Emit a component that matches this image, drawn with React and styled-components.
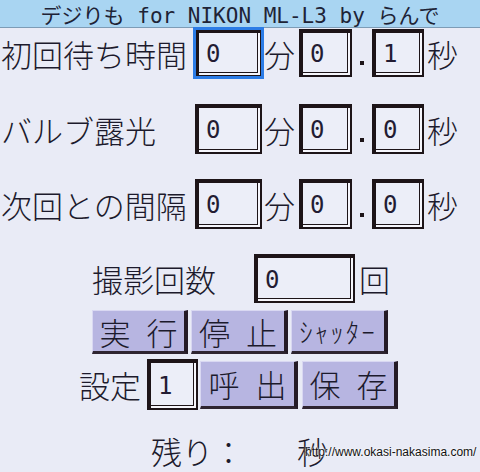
import React from 'react';
import styled, { createGlobalStyle } from 'styled-components';

const GlobalStyle = createGlobalStyle`
    html, body {
        margin: 0;
        padding: 0;
        background: #e9ebf6;
    }
    body {
        font-family: "Noto Sans CJK JP", sans-serif;
        font-weight: 300;
        color: #1c1a2c;
    }
`;

const Screen = styled.div`
    position: relative;
    width: 480px;
    height: 472px;
    overflow: hidden;
    display: flex;
    flex-direction: column;
    background: #e9ebf6;
`;

const TitleBar = styled.div`
    flex: none;
    height: 27px;
    border-bottom: 1px solid #7d9cb6;
    background: #a9d5f2;
    display: flex;
    align-items: center;
    justify-content: center;
    font-family: "DejaVu Sans Mono", "Noto Sans CJK JP", monospace;
    font-size: 21px;
    font-weight: 400;
    color: #1e2336;
    white-space: pre;
`;

const Row = styled.div`
    flex: none;
    display: flex;
    align-items: center;
    height: ${p => p.$h || 50}px;
    margin-top: ${p => p.$top || 0}px;
    padding-left: ${p => p.$left || 0}px;
    gap: ${p => p.$gap || 0}px;
`;

const Label = styled.span`
    flex: none;
    width: ${p => (p.$w ? `${p.$w}px` : 'auto')};
    margin-left: ${p => p.$ml || 0}px;
    margin-right: ${p => p.$mr || 0}px;
    font-size: 31px;
    line-height: 1;
    white-space: nowrap;
`;

const Field = styled.div`
    box-sizing: border-box;
    flex: none;
    width: ${p => p.$w}px;
    height: ${p => p.$h || 50}px;
    margin-left: ${p => p.$ml || 0}px;
    border-style: solid;
    border-color: #1d1418;
    border-width: 4px 2px 2px 4px;
    box-shadow: inset -2px -2px 0 #f6f6fc, inset -3px -3px 0 #1d1418;
    outline: ${p => (p.$focus ? '3px solid #2c7ce6' : 'none')};
    outline-offset: -1px;
    background: #eceef8;
    display: flex;
    align-items: center;
    padding-left: 7px;
    font-family: "DejaVu Sans Mono", monospace;
    font-size: 24px;
    font-weight: 400;
    color: #231c33;
`;

const Dot = styled.span`
    flex: none;
    width: 20px;
    align-self: stretch;
    display: flex;
    align-items: flex-end;
    justify-content: center;
    padding-bottom: 12px;
    box-sizing: border-box;
    &::before {
        content: '';
        width: 4px;
        height: 4px;
        background: #1d1418;
    }
`;

const Button = styled.div`
    box-sizing: border-box;
    flex: none;
    width: ${p => p.$w}px;
    height: ${p => p.$h || 44}px;
    background: #b7b5e1;
    border-style: solid;
    border-width: 1px 4px 3px 1px;
    border-color: #d9d8f2 #241a26 #2e2430 #d9d8f2;
    display: flex;
    align-items: center;
    justify-content: center;
    gap: 16px;
    font-size: ${p => p.$size || 31}px;
    letter-spacing: ${p => p.$spacing || 0}px;
    line-height: 1;
    white-space: nowrap;
`;

const Watermark = styled.span`
    position: absolute;
    left: 305px;
    top: 445px;
    font-family: "Liberation Sans", Arial, sans-serif;
    font-size: 12px;
    font-weight: 400;
    color: #111;
    text-shadow: 0 0 2px #fff, 0 0 2px #fff;
`;

const Chars = ({ text }) => text.split('').map((c, i) => <span key={i}>{c}</span>);

const TimeRow = ({ label, top, h, min, sec, tenth, focus }) => (
    <Row $top={top} $h={h}>
        <Label $w={194} style={{ paddingLeft: 1 }}>{label}</Label>
        <Field $w={67} $h={h} $focus={focus}>{min}</Field>
        <Label $ml={2} $mr={4}>分</Label>
        <Field $w={53} $h={h}>{sec}</Field>
        <Dot />
        <Field $w={52} $h={h}>{tenth}</Field>
        <Label $ml={3}>秒</Label>
    </Row>
);

const App = () => {
    return (
        <>
            <GlobalStyle />
            <Screen>
                <TitleBar>デジりも for NIKON ML-L3 by らんで</TitleBar>

                <TimeRow label="初回待ち時間" top={1} h={48} min="0" sec="0" tenth="1" focus />
                <TimeRow label="バルブ露光" top={27} h={50} min="0" sec="0" tenth="0" />
                <TimeRow label="次回との間隔" top={25} h={50} min="0" sec="0" tenth="0" />

                <Row $top={25} $h={49} $left={92}>
                    <Label>撮影回数</Label>
                    <Field $w={101} $h={49} $ml={38}>0</Field>
                    <Label $ml={4}>回</Label>
                </Row>

                <Row $top={7} $h={44} $left={92} $gap={3}>
                    <Button $w={96}><Chars text="実行" /></Button>
                    <Button $w={97}><Chars text="停止" /></Button>
                    <Button $w={97} $size={27} $spacing={2}>ｼｬｯﾀｰ</Button>
                </Row>

                <Row $top={5} $h={51} $left={79}>
                    <Label>設定</Label>
                    <Field $w={51} $h={51} $ml={6}>1</Field>
                    <Button $w={98} $h={48} style={{ marginLeft: 2 }}><Chars text="呼出" /></Button>
                    <Button $w={96} $h={48} style={{ marginLeft: 4 }}><Chars text="保存" /></Button>
                </Row>

                <Row $top={18} $h={44} $left={151}>
                    <Label>残り：</Label>
                    <Label $ml={53}>秒</Label>
                </Row>

                <Watermark>http://www.okasi-nakasima.com/</Watermark>
            </Screen>
        </>
    );
};

export default App;
